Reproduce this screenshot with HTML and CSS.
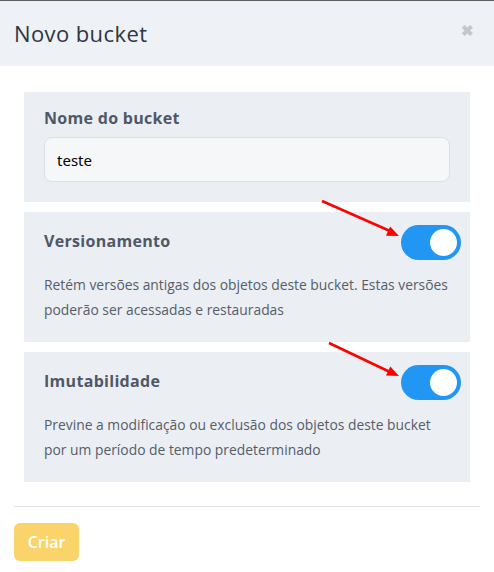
FILE: index.html
```html
<!DOCTYPE html>
<html lang="pt-BR">
<head>
    <meta charset="UTF-8">
    <meta name="viewport" content="width=device-width, initial-scale=1.0">
    <title>Novo bucket</title>
    <link rel="stylesheet" href="styles.css">
</head>
<body>
    <div class="modal">
        <div class="modal-header">
            <h1 class="modal-title">Novo bucket</h1>
            <span class="close">&#10006;</span>
        </div>

        <div class="modal-body">
            <div class="section">
                <label class="section-title" for="bucketName">Nome do bucket</label>
                <input type="text" id="bucketName" class="text-input" value="teste">
            </div>

            <div class="section section-toggle">
                <div class="section-head">
                    <span class="section-title">Versionamento</span>
                    <span class="switch on"><span class="knob"></span></span>
                </div>
                <p class="section-text">Retém versões antigas dos objetos deste bucket. Estas versões poderão ser acessadas e restauradas</p>
            </div>

            <div class="section section-toggle">
                <div class="section-head">
                    <span class="section-title">Imutabilidade</span>
                    <span class="switch on"><span class="knob"></span></span>
                </div>
                <p class="section-text">Previne a modificação ou exclusão dos objetos deste bucket por um período de tempo predeterminado</p>
            </div>
        </div>

        <div class="modal-footer">
            <button class="btn-create">Criar</button>
        </div>

        <!-- annotation arrows drawn over the screenshot -->
        <svg class="arrows" width="494" height="572" viewBox="0 0 494 572">
            <line x1="322" y1="201" x2="390" y2="231" stroke="#ff0000" stroke-width="2.5"/>
            <polygon points="399,236 386,235.7 390.1,226.5" fill="#ff0000"/>
            <line x1="329" y1="343" x2="390" y2="372" stroke="#ff0000" stroke-width="2.5"/>
            <polygon points="399,376 386,375.4 390.3,366.4" fill="#ff0000"/>
        </svg>
    </div>
</body>
</html>
```

FILE: styles.css
```css
body {
    margin: 0;
    font-family: "Open Sans", "Noto Sans", sans-serif;
    background: #ffffff;
}

.modal {
    position: relative;
    width: 494px;
    min-height: 572px;
    border-top: 1px solid #5f5f5f;
    box-sizing: border-box;
}

.modal-header {
    display: flex;
    justify-content: space-between;
    align-items: center;
    height: 65px;
    padding: 0 20px 0 14px;
    background: #eef1f6;
}

.modal-title {
    margin: 0;
    font-size: 22px;
    font-weight: 400;
    letter-spacing: 0.4px;
    color: #2f3640;
    padding-bottom: 2px;
}

.close {
    color: #c4c6c9;
    font-size: 15px;
    font-weight: bold;
    margin-bottom: 8px;
}

.modal-body {
    display: flex;
    flex-direction: column;
    gap: 10px;
    padding: 26px 24px 24px;
}

.section {
    display: flex;
    flex-direction: column;
    background: #ebeff4;
    padding: 15px 20px 20px;
}

.section-toggle {
    padding-top: 13px;
}

.section-head {
    display: flex;
    justify-content: space-between;
    align-items: center;
}

.section-head .section-title {
    margin-bottom: 4px;
}

.section-title {
    font-size: 16px;
    font-weight: 700;
    letter-spacing: 0.3px;
    color: #4f5866;
}

.text-input {
    margin-top: 8px;
    height: 45px;
    padding: 0 12px;
    border: 1px solid #dcdfe3;
    border-radius: 8px;
    background: #f5f7f9;
    font-family: "Noto Sans", sans-serif;
    font-size: 15px;
    color: #000;
    outline: none;
    box-sizing: border-box;
}

.switch {
    display: flex;
    align-items: center;
    justify-content: flex-end;
    width: 60px;
    height: 35px;
    padding: 0 4px;
    border-radius: 18px;
    background: #2196f3;
    box-sizing: border-box;
    margin-right: -11px;
}

.knob {
    width: 27px;
    height: 27px;
    border-radius: 50%;
    background: #fff;
}

.section-text {
    margin: 12px 0 0;
    font-size: 13.85px;
    line-height: 25px;
    color: #555d68;
}

.modal-footer {
    margin: 0 14px;
    padding-top: 16px;
    border-top: 1px solid #e1e3e6;
}

.btn-create {
    width: 65px;
    height: 38px;
    border: none;
    border-radius: 6px;
    background: #fad46a;
    color: #ffffff;
    font-family: "Open Sans", sans-serif;
    font-size: 16px;
    font-weight: 600;
    cursor: pointer;
}

.arrows {
    position: absolute;
    top: -1px;
    left: 0;
    pointer-events: none;
}
```
